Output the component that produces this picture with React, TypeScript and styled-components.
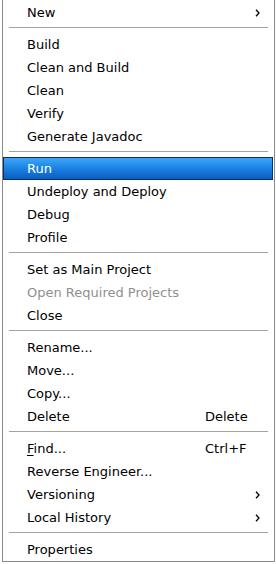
import { ReactElement, Fragment } from 'react';
import styled, { createGlobalStyle } from 'styled-components';

const GlobalStyle = createGlobalStyle`
  html, body {
    margin: 0;
    padding: 0;
    background: #fff;
  }
  body {
    font-family: 'DejaVu Sans', 'Liberation Sans', sans-serif;
    font-size: 13px;
  }
`;

const Menu = styled.div`
  box-sizing: border-box;
  width: 273px;
  margin-left: 2px;
  padding: 1px 1px 0 0;
  border: 1px solid #8a8a8a;
  border-top: none;
  background: #fff;
  display: flex;
  flex-direction: column;
`;

const Item = styled.div<{ selected?: boolean; disabled?: boolean }>`
  box-sizing: border-box;
  height: 23px;
  display: grid;
  grid-template-columns: 178px 1fr;
  align-items: center;
  padding: 0 13px 0 24px;
  color: ${({ selected, disabled }) =>
    selected ? '#fff' : disabled ? '#8f8f8f' : '#000'};
  background: ${({ selected }) =>
    selected ? 'linear-gradient(#3ea6f7, #1a82e2 50%, #0a5cc2)' : 'transparent'};
  border: 1px solid ${({ selected }) => (selected ? '#0b2f5e' : 'transparent')};
  border-left-width: 0;
  border-right-width: 0;
  white-space: nowrap;
  line-height: 21px;

  ${({ selected }) =>
    selected &&
    `
    border-left-width: 1px;
    border-right-width: 1px;
    padding-left: 23px;
    padding-right: 12px;
  `}
`;

const Label = styled.span`
  u {
    text-decoration: underline;
    text-underline-offset: 2px;
  }
`;

const Trailing = styled.span<{ arrow?: boolean }>`
  justify-self: ${({ arrow }) => (arrow ? 'end' : 'start')};
  display: flex;
  align-items: center;
`;

const Separator = styled.div`
  height: 9px;
  display: flex;
  align-items: flex-start;
  padding: 3px 5px 0 6px;
  box-sizing: border-box;

  &::after {
    content: '';
    flex: 1;
    height: 1px;
    background: #a6a39c;
  }
`;

const Arrow = (): ReactElement => (
  <svg width="5" height="8" viewBox="0 0 5 8">
    <path d="M1 0.8 L4 4 L1 7.2" fill="none" stroke="#000" strokeWidth="1.3" />
  </svg>
);

type Entry =
  | { sep: true }
  | {
      sep?: false;
      label: string;
      mnemonic?: boolean;
      accel?: string;
      submenu?: boolean;
      selected?: boolean;
      disabled?: boolean;
    };

const entries: Entry[] = [
  { label: 'New', submenu: true },
  { sep: true },
  { label: 'Build' },
  { label: 'Clean and Build' },
  { label: 'Clean' },
  { label: 'Verify' },
  { label: 'Generate Javadoc' },
  { sep: true },
  { label: 'Run', selected: true },
  { label: 'Undeploy and Deploy' },
  { label: 'Debug' },
  { label: 'Profile' },
  { sep: true },
  { label: 'Set as Main Project' },
  { label: 'Open Required Projects', disabled: true },
  { label: 'Close' },
  { sep: true },
  { label: 'Rename...' },
  { label: 'Move...' },
  { label: 'Copy...' },
  { label: 'Delete', accel: 'Delete' },
  { sep: true },
  { label: 'Find...', mnemonic: true, accel: 'Ctrl+F' },
  { label: 'Reverse Engineer...' },
  { label: 'Versioning', submenu: true },
  { label: 'Local History', submenu: true },
  { sep: true },
  { label: 'Properties' },
];

const App = (): ReactElement => {
  return (
    <>
      <GlobalStyle />
      <Menu>
        {entries.map((e, i) => {
          if (e.sep) return <Separator key={i} />;
          return (
            <Item key={i} selected={e.selected} disabled={e.disabled}>
              <Label>
                {e.mnemonic ? (
                  <Fragment>
                    <u>{e.label[0]}</u>
                    {e.label.slice(1)}
                  </Fragment>
                ) : (
                  e.label
                )}
              </Label>
              {e.accel && <Trailing>{e.accel}</Trailing>}
              {e.submenu && (
                <Trailing arrow>
                  <Arrow />
                </Trailing>
              )}
            </Item>
          );
        })}
      </Menu>
    </>
  );
};

export default App;
